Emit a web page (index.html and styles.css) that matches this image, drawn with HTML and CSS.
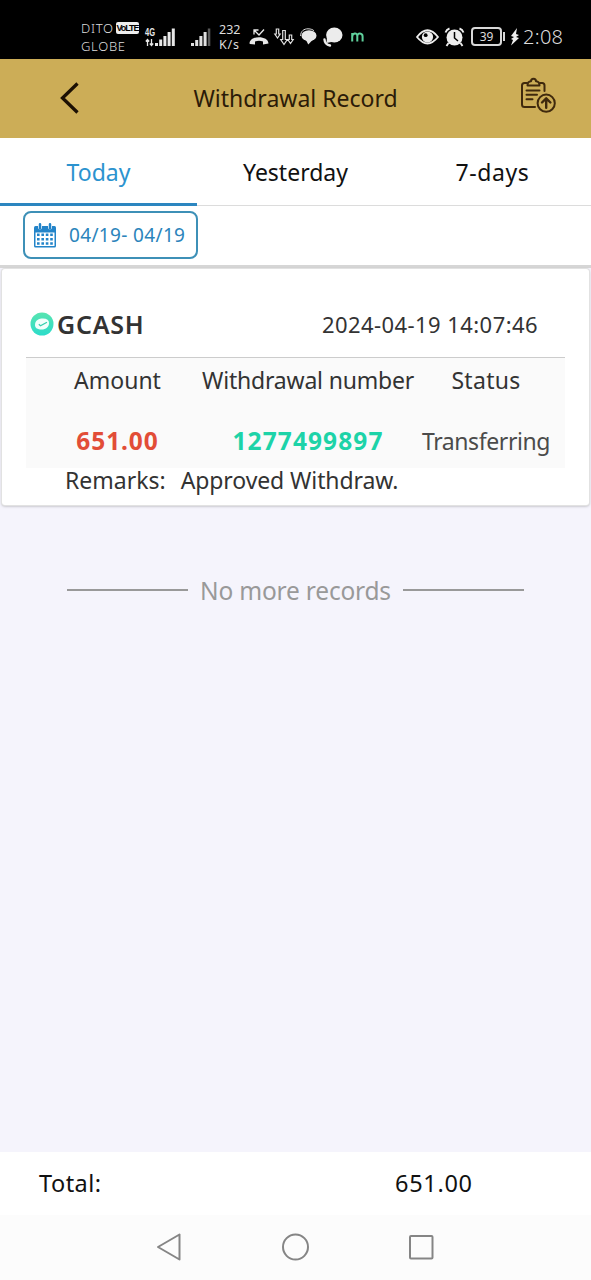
FILE: index.html
```html
<!DOCTYPE html>
<html lang="en">
<head>
<meta charset="utf-8">
<title>Withdrawal Record</title>
<link rel="stylesheet" href="styles.css">
</head>
<body>
<div class="screen">
  <div class="status">
    <div class="carrier">
      <div class="carrier-row"><span class="c-dito">DITO</span><span class="volte">VoLTE</span></div>
      <div class="c-globe">GLOBE</div>
    </div>
    <svg class="signal-main" width="31" height="22" viewBox="0 0 31 22">
      <text class="net" x="0" y="10" textLength="10" lengthAdjust="spacingAndGlyphs">4G</text>
      <path d="M2.500 20v-6M.8 15.500l1.700-2 1.700 2M6.500 13v6M4.800 17.500l1.700 2 1.700-2" stroke="#e8e8e8" stroke-width="1.300" fill="none"/>
      <path d="M10 17h3v3h-3zM14.200 13.500h3V20h-3zM18.400 10h3v10h-3zM22.600 6h3v14h-3zM26.800 2.500h3V20h-3z" fill="#e8e8e8"/>
    </svg>
    <svg class="signal-alt" width="20" height="20" viewBox="0 0 20 20">
      <path d="M0 16h3v3H0zM4.200 13h3v6h-3zM8.400 9h3v10h-3zM12.600 5h3v14h-3z" fill="#e0e0e0"/>
      <path d="M16.800 1.500h2.500V19h-2.500z" fill="#5a5a5a"/>
    </svg>
    <div class="speed"><span class="sp-n">232</span><span class="sp-u">K/s</span></div>
    <svg class="missed" width="20" height="18" viewBox="0 0 20 18">
      <path d="M.5 15.500C.5 7 19.500 7 19.500 15.500L14 16.500v-3q-4-1.500-8 0v3L1 16z" fill="#e8e8e8"/>
      <path d="M5 6.500V2h4.500M5 2l5 5 5-5.500" fill="none" stroke="#e8e8e8" stroke-width="1.300"/>
    </svg>
    <svg class="arrows" width="20" height="18" viewBox="0 0 20 18" fill="none" stroke="#e0e0e0" stroke-width="1.200">
      <path d="M2.300 1h2.400v5h1.500l-2.700 4-2.700-4h1.500zM8.700 2.500h2.600v9h2L10 16.500l-3.300-5h2zM15.300 7h2.400v4.500h1.500l-2.700 4-2.700-4h1.500z"/>
    </svg>
    <svg class="chat" width="17" height="17" viewBox="0 0 17 17">
      <path d="M.6 8C.6 3 4 .8 8 .8c3 0 5 1 6 2" fill="none" stroke="#ddd" stroke-width="1"/>
      <ellipse cx="9" cy="7.700" rx="7.500" ry="5.500" fill="#e8e8e8"/>
      <path d="M6 12l2.300 4.600L12.500 12z" fill="#e8e8e8"/>
    </svg>
    <svg class="buds" width="20" height="20" viewBox="0 0 20 20">
      <ellipse cx="11.300" cy="8" rx="8.200" ry="7.500" fill="#ececec"/>
      <path d="M4 10l-.5 6 5-1z" fill="#ececec"/>
      <path d="M1.500 12.500q.3 5 5.500 6" fill="none" stroke="#ececec" stroke-width="2.400" stroke-linecap="round"/>
    </svg>
    <svg class="mark" width="13" height="10" viewBox="0 0 13 10"><path d="M1.200 9.500V1M1.200 5C1.200 1 6.300 0 6.300 4v5.500M6.300 4.500C6.300 0 11.600 1 11.600 4.500v5" fill="none" stroke="#5fd09c" stroke-width="2"/></svg>
    <svg class="eye" width="23" height="16" viewBox="0 0 23 16">
      <path d="M1 8Q11.500-5.500 22 8 11.500 21 1 8z" fill="none" stroke="#eee" stroke-width="1.800"/>
      <circle cx="11.500" cy="8" r="5.600" fill="#eee"/><circle cx="9.700" cy="6.200" r="1.900" fill="#000"/>
    </svg>
    <svg class="alarm" width="21" height="20" viewBox="0 0 21 20">
      <circle cx="10.500" cy="10.500" r="8" fill="#eee"/>
      <path d="M1.500 5.500q1-3 4-4M15.500 1.500q3 1 4 4M4.500 16l-2 3M16.500 16l2 3" stroke="#eee" stroke-width="1.900" fill="none"/>
      <path d="M10.500 5v6l3.500 3" fill="none" stroke="#000" stroke-width="1.500"/>
    </svg>
    <div class="battery"><span class="b-n">39</span></div><div class="b-tip"></div>
    <svg class="bolt" width="10" height="18" viewBox="0 0 10 18"><path d="M7 0L1 8l3 1-3 2 2 1-2 5.500L9 10l-3-1 3-2-3-1z" fill="#eee"/></svg>
    <div class="clock">2:08</div>
  </div>

  <div class="header">
    <svg class="back" width="22" height="34" viewBox="0 0 22 34"><path d="M18.500 2.500L3.500 17l15 14.500" fill="none" stroke="#1c1003" stroke-width="3.300"/></svg>
    <div class="title">Withdrawal Record</div>
    <svg class="clip" width="36" height="36" viewBox="0 0 36 36" fill="none" stroke="#3f290d" stroke-width="2" stroke-linecap="round" stroke-linejoin="round">
      <path d="M7 5H4.500Q2 5 2 7.500v19Q2 29 4.500 29H15M20 5h2.200Q24.500 5 24.500 7.500V13"/>
      <path d="M7.500 7.500q0-4 3.500-4.200 0-2.500 2.500-2.500t2.500 2.500q3.500.2 3.500 4.200z"/>
      <path d="M6.500 12.500h13M6.500 16.800h10.500M6.500 21.200h6"/>
      <circle cx="26.200" cy="25.200" r="8.600"/><path d="M26.200 29.800v-9M22 24.500l4.200-4.200 4.200 4.200" stroke-width="2.400"/>
    </svg>
  </div>

  <div class="tabs">
    <div class="tab active"><span class="t-today">Today</span></div>
    <div class="tab"><span class="t-yest">Yesterday</span></div>
    <div class="tab"><span class="t-week">7-days</span></div>
  </div>

  <div class="filter">
    <div class="range">
      <svg width="22" height="25" viewBox="0 0 22 25">
        <path d="M0 4.500Q0 3 1.500 3h19Q22 3 22 4.500V23q0 1.500-1.500 1.500h-19Q0 24.500 0 23z" fill="#2384c9"/>
        <path d="M1.500 9.500h19V23h-19z" fill="#fff"/>
        <path d="M3 11.800h16M3 16.200h16M3 20.600h16" stroke="#2384c9" stroke-width="2.500" stroke-dasharray="2.600 1.800"/>
        <path d="M6 1.500v3M16 1.500v3" stroke="#fff" stroke-width="4" stroke-linecap="round"/>
        <path d="M6 1.200v4M16 1.200v4" stroke="#2384c9" stroke-width="2.500" stroke-linecap="round"/>
      </svg>
      <span class="range-text">04/19- 04/19</span>
    </div>
  </div>

  <div class="list">
    <div class="card">
      <div class="card-head">
        <svg class="gcash" width="24" height="24" viewBox="0 0 24 24">
          <defs><linearGradient id="mint" x2="0" y2="1"><stop stop-color="#58e4b0"/><stop offset="1" stop-color="#2cdcca"/></linearGradient></defs>
          <circle cx="12" cy="12" r="11.500" fill="url(#mint)"/>
          <path d="M5 13C5 8 9 6.500 13 6.500c4 0 6 1.500 6 4.500 0 4-3 6.500-7.500 6.500C7.500 17.500 5 16 5 13z" fill="#f2fffc"/>
          <path d="M8.800 12.300l1.700 1.400 6.500-3.500" stroke="#35cfae" stroke-width="1.300" fill="none"/>
        </svg>
        <span class="method">GCASH</span>
        <span class="date">2024-04-19 14:07:46</span>
      </div>
      <div class="grid">
        <div class="cell"><span class="k1">Amount</span></div>
        <div class="cell"><span class="k2">Withdrawal number</span></div>
        <div class="cell"><span class="k3">Status</span></div>
        <div class="cell"><span class="v1">651.00</span></div>
        <div class="cell"><span class="v2">1277499897</span></div>
        <div class="cell"><span class="v3">Transferring</span></div>
      </div>
      <div class="remarks"><span class="r-key">Remarks:</span><span class="r-val">Approved Withdraw.</span></div>
    </div>
    <div class="end"><i class="rule"></i><span class="end-text">No more records</span><i class="rule"></i></div>
  </div>

  <div class="total"><span class="total-k">Total:</span><span class="total-v">651.00</span></div>
  <div class="nav">
    <svg width="26" height="28" viewBox="0 0 26 28"><path d="M23.500 1.500v25L2 14z"/></svg>
    <svg width="28" height="28" viewBox="0 0 28 28"><circle cx="13.500" cy="14" r="12.500"/></svg>
    <svg width="24" height="24" viewBox="0 0 24 24"><rect x="1" y="1" width="22.500" height="22.500" rx="1"/></svg>
  </div>
</div>
</body>
</html>
```

FILE: styles.css
```css
* { box-sizing: border-box; }
body { margin: 0; font-family: "Noto Sans", "Open Sans", sans-serif; }
svg { display: block; flex: none; overflow: visible; }
span { white-space: nowrap; }
.screen { width: 591px; height: 1280px; display: flex; flex-direction: column; background: #fff; overflow: hidden; }

.status { height: 59px; flex: none; background: #000; display: flex; align-items: center; padding: 14px 0 0 81px; color: #ddd; }
.carrier { width: 64px; font-size: 13px; line-height: 18px; font-weight: 300; letter-spacing: .7px; }
.carrier-row { display: flex; align-items: center; }
.c-dito { width: 35px; }
.volte { width: 23px; height: 12px; border-radius: 2px; background: #eee; color: #000; font: bold 9px/12px "Liberation Sans", sans-serif; letter-spacing: -1px; text-align: center; }
.net { font: bold 11px "Liberation Sans", sans-serif; fill: #e8e8e8; }
.signal-alt { margin-left: 15px; }
.speed { width: 30px; margin-left: 8px; display: flex; flex-direction: column; font-size: 12.5px; line-height: 15px; }
.sp-u { letter-spacing: .8px; }
.arrows { margin-left: 5px; }
.chat { margin-left: 6px; }
.buds { margin-left: 6px; }
.mark { margin-left: 8px; }
.eye { margin-left: 52px; }
.alarm { margin-left: 5px; }
.battery { width: 31px; height: 19px; margin-left: 6px; border: 2px solid #d8d8d8; border-radius: 4px; font-size: 12px; line-height: 15px; text-align: center; }
.b-tip { width: 2px; height: 9px; margin-left: 1px; background: #d8d8d8; }
.bolt { margin-left: 5px; }
.clock { margin-left: 3px; font-size: 20px; line-height: 20px; font-weight: 300; letter-spacing: .3px; }

.header { height: 79px; flex: none; background: #ccad57; display: flex; align-items: center; padding: 0 35px 2px 59px; color: #2b1b08; }
.title { flex: 1; text-align: center; font-size: 23px; padding-right: 24px; }
.back { margin-right: 14px; }
.clip { margin-top: -3px; }

.tabs { height: 68px; flex: none; display: grid; grid-template-columns: repeat(3, 1fr); border-bottom: 1px solid #dcdcdc; font-size: 23px; color: #111; }
.tab { height: 68px; display: flex; align-items: center; justify-content: center; padding-bottom: 1px; }
.active { color: #2b93cf; border-bottom: 3px solid #2c86c0; padding: 2px 0 0; }
.t-week { letter-spacing: .6px; }

.filter { height: 62px; flex: none; padding: 5px 0 0 23px; border-bottom: 3px solid #d6d6d6; }
.range { width: 175px; height: 48px; border: 2px solid #3d90b7; border-radius: 8px; display: flex; align-items: center; padding-left: 9px; color: #2b84bb; }
.range-text { margin-left: 13px; font-size: 19px; letter-spacing: .35px; }

.list { flex: 1; background: #f5f4fc; padding-top: 1px; }
.card { height: 236px; margin: 0 2px; background: #fff; border-radius: 3px; box-shadow: 0 0 0 1px #e2e2e2, 0 1px 3px rgba(0,0,0,.35); padding: 0 24px; color: #333; }
.card-head { height: 89px; border-bottom: 1px solid #ccc; display: flex; align-items: center; padding: 22px 27px 0 4px; }
.method { margin-left: 3px; font-size: 25px; font-weight: 600; letter-spacing: .8px; }
.date { margin-left: auto; font-size: 22px; letter-spacing: .43px; }
.grid { height: 110px; background: #fafafa; display: grid; grid-template-columns: 183px 198px 158px; grid-template-rows: 44px 66px; font-size: 23px; }
.cell { display: flex; align-items: center; justify-content: center; }
.cell:nth-child(n+4) { padding-top: 11px; }
.k2 { letter-spacing: -.2px; }
.k3 { letter-spacing: .3px; }
.v1 { font-size: 24.5px; font-weight: 700; letter-spacing: .9px; color: #e24d37; }
.v2 { font-size: 24.5px; font-weight: 700; letter-spacing: 1.1px; color: #1dd3a8; }
.v3 { letter-spacing: -.4px; color: #4b4b4b; }
.remarks { display: flex; padding-left: 39px; font-size: 23px; line-height: 24px; }
.r-val { margin-left: 15px; letter-spacing: -.1px; }
.end { display: flex; align-items: center; justify-content: center; margin-top: 68px; height: 34px; color: #999; font-size: 24.5px; }
.rule { width: 121px; height: 2px; background: #999; }
.end-text { width: 215px; text-align: center; letter-spacing: -.2px; }

.total { height: 63px; flex: none; display: flex; align-items: center; padding: 0 0 2px 39px; font-size: 23.5px; color: #111; }
.total-k { width: 356px; letter-spacing: .5px; }
.total-v { letter-spacing: .7px; }
.nav { height: 65px; flex: none; background: #fcfcfc; display: flex; align-items: center; padding: 0 0 2px 156px; gap: 99px; }
.nav svg { fill: none; stroke: #858585; stroke-width: 2; stroke-linejoin: round; }
.nav svg:first-child { margin-right: 1px; }
```
